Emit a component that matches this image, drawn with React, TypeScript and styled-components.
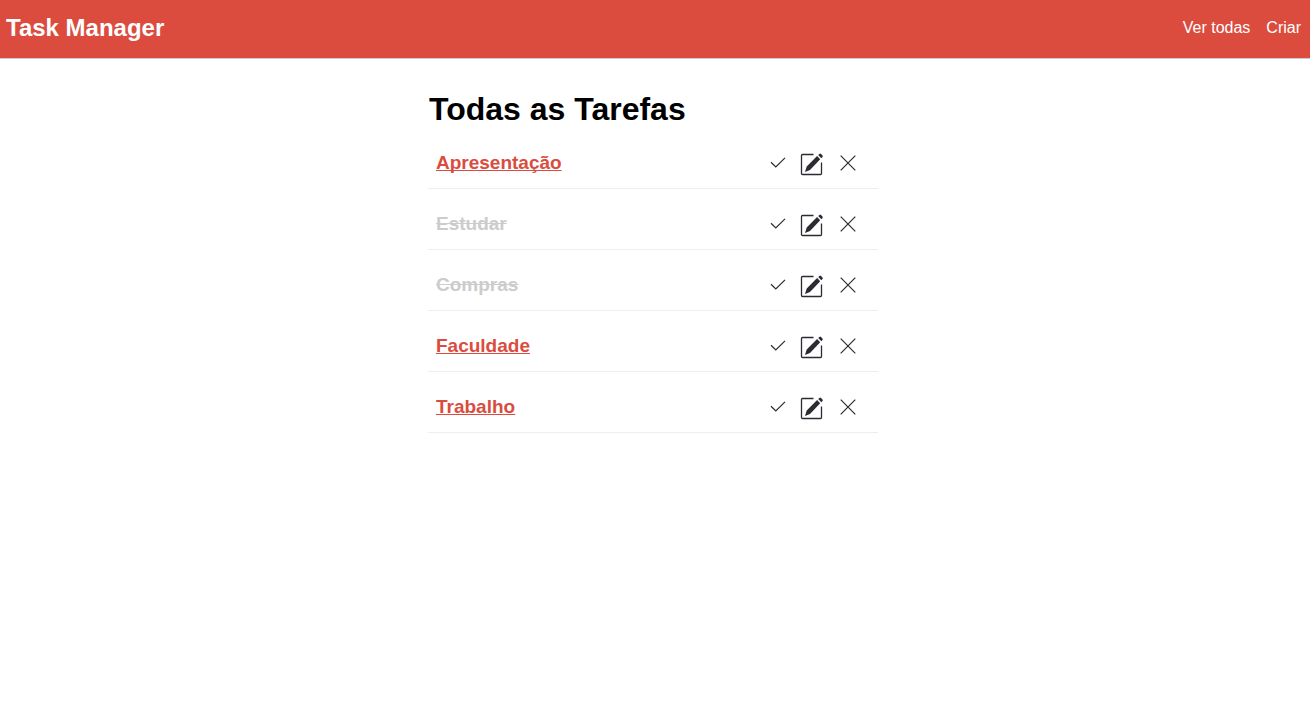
import React from "react";
import styled, { createGlobalStyle, css } from "styled-components";

const GlobalStyle = createGlobalStyle`
  * {
    box-sizing: border-box;
  }
  body {
    margin: 0;
    background: #fff;
    color: #000;
    font-family: "Liberation Sans", Arial, sans-serif;
    font-size: 16px;
  }
`;

const Header = styled.header`
  display: flex;
  align-items: center;
  justify-content: space-between;
  padding: 14px 9px 16px 6px;
  background: #db4c3f;
  border-bottom: 1px solid #ccc;
`;

const Brand = styled.h2`
  margin: 0;
  color: #fff;
  font-size: 24px;
  line-height: 28px;
`;

const Nav = styled.nav`
  display: flex;
  gap: 16px;
`;

const NavLink = styled.a`
  color: #fff;
  line-height: 20px;
  text-decoration: none;
`;

const Main = styled.main`
  display: flex;
  justify-content: center;
  padding: 32px 4px 0 0;
`;

const Panel = styled.section`
  width: 100%;
  max-width: 450px;
`;

const Title = styled.h1`
  margin: 0 0 23px 1px;
  font-size: 32px;
  line-height: 36px;
`;

const TaskList = styled.ul`
  margin: 0;
  padding: 0;
  list-style: none;
`;

const TaskRow = styled.li`
  display: flex;
  align-items: center;
  justify-content: space-between;
  padding: 0 20px 10px 8px;
  border-bottom: 1px solid #eee;

  & + & {
    padding-top: 22px;
  }
`;

const TaskName = styled.a<{ $done: boolean }>`
  color: #db4c3f;
  font-size: 19px;
  font-weight: bold;
  line-height: 24px;
  text-decoration: underline;
  text-decoration-thickness: 1px;
  text-decoration-skip-ink: none;
  padding-bottom: 3px;
  ${({ $done }) =>
    $done &&
    css`
      color: #ccc;
      text-decoration: line-through;
    `}
`;

const Actions = styled.div`
  display: flex;
  align-items: center;
  gap: 14px;
`;

const IconButton = styled.button`
  display: flex;
  padding: 0;
  border: 0;
  background: none;
  color: #2b2b33;
  cursor: pointer;
`;

const CheckIcon = () => (
  <svg width="16" height="28" viewBox="0 0 16 28" fill="none" stroke="currentColor" strokeWidth="1.2" aria-hidden="true">
    <path d="M1 12.3 5.8 17 15 7.8" />
  </svg>
);

const EditIcon = () => (
  <svg width="24" height="28" viewBox="0 1 24 28" aria-hidden="true">
    <path
      d="M13.500 5.500H2.500Q1.500 5.500 1.500 6.500V24.500Q1.500 25.500 2.500 25.500H20.500Q21.500 25.500 21.500 24.500V13.500"
      fill="none"
      stroke="currentColor"
      strokeWidth="1.300"
    />
    <path
      d="M5 23 6.700 17.600 17.100 7.100 20.200 10.200 10 21ZM18.200 6 19.400 4.900Q20.200 4.200 21 4.900L22.500 6.400Q23.100 7.200 22.500 8L21.300 9.200Z"
      fill="currentColor"
    />
  </svg>
);

const CloseIcon = () => (
  <svg width="20" height="28" viewBox="0 0 20 28" fill="none" stroke="currentColor" strokeWidth="1.2" aria-hidden="true">
    <path d="M2.700 5.700 17.300 20.300M17.300 5.700 2.700 20.300" />
  </svg>
);

const tasks = [
  { name: "Apresentação", done: false },
  { name: "Estudar", done: true },
  { name: "Compras", done: true },
  { name: "Faculdade", done: false },
  { name: "Trabalho", done: false },
];

export default function App() {
  return (
    <>
      <GlobalStyle />
      <Header>
        <Brand>Task Manager</Brand>
        <Nav>
          <NavLink href="#todas">Ver todas</NavLink>
          <NavLink href="#criar">Criar</NavLink>
        </Nav>
      </Header>
      <Main>
        <Panel>
          <Title>Todas as Tarefas</Title>
          <TaskList>
            {tasks.map(({ name, done }) => (
              <TaskRow key={name}>
                <TaskName href={`#${name}`} $done={done}>
                  {name}
                </TaskName>
                <Actions>
                  <IconButton type="button" aria-label={`Concluir ${name}`}>
                    <CheckIcon />
                  </IconButton>
                  <IconButton type="button" aria-label={`Editar ${name}`}>
                    <EditIcon />
                  </IconButton>
                  <IconButton type="button" aria-label={`Excluir ${name}`}>
                    <CloseIcon />
                  </IconButton>
                </Actions>
              </TaskRow>
            ))}
          </TaskList>
        </Panel>
      </Main>
    </>
  );
}
